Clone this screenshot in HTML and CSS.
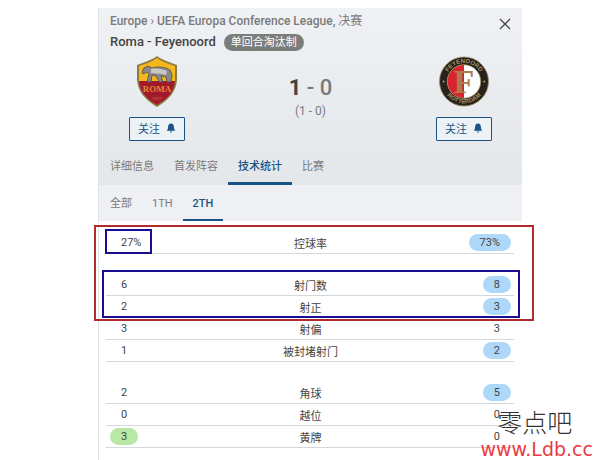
FILE: index.html
```html
<!DOCTYPE html>
<html lang="zh-CN">
<head>
    <meta charset="UTF-8">
    <meta name="viewport" content="width=device-width, initial-scale=1">
    <title>Roma - Feyenoord</title>
    <link rel="stylesheet" href="styles.css">
</head>
<body>
    <main class="match">
        <header class="match-header">
            <div class="match-top">
                <div>
                    <p class="breadcrumb">Europe <span class="sep">›</span> UEFA Europa Conference League, <span class="stage">决赛</span></p>
                    <h1>Roma - Feyenoord <span class="tag">单回合淘汰制</span></h1>
                </div>
                <button class="close-btn" aria-label="关闭">
                    <svg width="12" height="12" viewBox="0 0 12 12"><path d="M1 1L11 11M11 1L1 11" stroke="#444" stroke-width="1.3"/></svg>
                </button>
            </div>

            <div class="teams">
                <div class="team">
                    <svg class="logo" viewBox="0 0 50 51">
                        <path d="M25 0C20 4 12 6 5 9V24C6 35 12 43 25 51C38 43 44 35 45 24V9C38 6 30 4 25 0Z" fill="#8d7b45"/>
                        <path d="M25 2C20 6 13 8 7 10V25H43V10C37 8 30 6 25 2Z" fill="#f5b81c"/>
                        <path d="M7 25H43C42 35 37 42 25 49C13 42 8 35 7 25Z" fill="#a3182c"/>
                        <path d="M10 16L12 12L16 10L20 12C26 10 33 11 38 14L40 19L39 26H35L34 21L29 20L31 26H27L24 20L20 19L19 26H15L17 18L15 16L11 18Z" fill="#8a8987" stroke="#4c4a48" stroke-width="0.8"/>
                        <path d="M19 13C25 12 30 13 35 15L34 19C28 17 23 18 19 17Z" fill="#c9c7c4"/>
                        <text x="25" y="36" class="roma-name">ROMA</text>
                        <text x="25" y="44" class="roma-year">1927</text>
                    </svg>
                    <button class="follow-btn">关注
                        <svg width="10" height="10" viewBox="0 0 10 10"><path d="M5 0.4C6.9 0.6 7.9 2 7.9 3.8C7.9 6 8.5 6.8 9.3 7.8H0.7C1.5 6.8 2.1 6 2.1 3.8C2.1 2 3.1 0.6 5 0.4ZM3.8 8.6H6.2C6.1 10 3.9 10 3.8 8.6Z" fill="#1a5285"/></svg>
                    </button>
                </div>

                <div class="score">
                    <p class="score-full"><b>1</b> - 0</p>
                    <p class="score-half">(1 - 0)</p>
                </div>

                <div class="team">
                    <svg class="logo" viewBox="0 0 50 51">
                        <defs>
                            <path id="ring-top" d="M6.5 25.5A18.5 18.5 0 0 1 43.5 25.5"/>
                            <path id="ring-bottom" d="M3.2 25.5A21.8 21.8 0 0 0 46.8 25.5"/>
                        </defs>
                        <circle cx="25" cy="25.5" r="24.5" fill="#27221b" stroke="#9b8b66" stroke-width="0.8"/>
                        <circle cx="25" cy="25.5" r="16.7" fill="#fff"/>
                        <path d="M25 8.8A16.7 16.7 0 0 0 25 42.2Z" fill="#d9232e"/>
                        <circle cx="25" cy="25.5" r="16.7" fill="none" stroke="#a08b5c" stroke-width="0.8"/>
                        <text x="25" y="37" class="crest-letter">F</text>
                        <text class="ring-text"><textPath href="#ring-top" startOffset="50%">FEYENOORD</textPath></text>
                        <text class="ring-text"><textPath href="#ring-bottom" startOffset="50%">ROTTERDAM</textPath></text>
                        <circle cx="4.7" cy="25.5" r="1" fill="#b09d70"/>
                        <circle cx="45.3" cy="25.5" r="1" fill="#b09d70"/>
                    </svg>
                    <button class="follow-btn">关注
                        <svg width="10" height="10" viewBox="0 0 10 10"><path d="M5 0.4C6.9 0.6 7.9 2 7.9 3.8C7.9 6 8.5 6.8 9.3 7.8H0.7C1.5 6.8 2.1 6 2.1 3.8C2.1 2 3.1 0.6 5 0.4ZM3.8 8.6H6.2C6.1 10 3.9 10 3.8 8.6Z" fill="#1a5285"/></svg>
                    </button>
                </div>
            </div>

            <nav class="tabs">
                <a href="#">详细信息</a>
                <a href="#">首发阵容</a>
                <a href="#" class="active">技术统计</a>
                <a href="#">比赛</a>
            </nav>
        </header>

        <nav class="tabs sub-tabs">
            <a href="#">全部</a>
            <a href="#">1TH</a>
            <a href="#" class="active">2TH</a>
        </nav>

        <section class="stats">
            <div class="stat-group">
                <div class="stat"><span class="value">27%</span><span>控球率</span><span class="value away">73%</span></div>
            </div>
            <div class="stat-group">
                <div class="stat"><span class="value">6</span><span>射门数</span><span class="value away">8</span></div>
                <div class="stat"><span class="value">2</span><span>射正</span><span class="value away">3</span></div>
                <div class="stat"><span class="value">3</span><span>射偏</span><span class="value">3</span></div>
                <div class="stat"><span class="value">1</span><span>被封堵射门</span><span class="value away">2</span></div>
            </div>
            <div class="stat-group">
                <div class="stat"><span class="value">2</span><span>角球</span><span class="value away">5</span></div>
                <div class="stat"><span class="value">0</span><span>越位</span><span class="value">0</span></div>
                <div class="stat"><span class="value home">3</span><span>黄牌</span><span class="value">0</span></div>
            </div>

            <!-- highlight frames over the rows -->
            <div class="frame frame-red"></div>
            <div class="frame frame-possession"></div>
            <div class="frame frame-shots"></div>
        </section>
    </main>

    <div class="watermark">
        <p class="mark-name">零点吧</p>
        <p class="mark-url">www.Ldb.cc</p>
    </div>
</body>
</html>
```
FILE: styles.css
```css
* {
    box-sizing: border-box;
}

body {
    margin: 0;
    padding: 8px 79px 0 98px;
    min-height: 100vh;
    display: flex;
    background: #fff;
    color: #444;
    font-family: Roboto, "Noto Sans CJK SC", sans-serif;
    font-size: 11px;
}

p, h1 {
    margin: 0;
}

button {
    font-family: inherit;
    cursor: pointer;
}

.match {
    flex: 1;
    border-left: 1px solid #dfe3e8;
}

.match-header {
    background: linear-gradient(#eff1f4, #e4e7e9);
}

.match-top {
    display: flex;
    justify-content: space-between;
    padding: 3px 11px 0;
}

.breadcrumb {
    font-size: 12px;
    font-weight: 500;
    line-height: 20px;
    color: #7a7a7a;
}

.sep,
.stage {
    font-weight: 400;
}

h1 {
    display: flex;
    align-items: center;
    gap: 8px;
    font-size: 13px;
    font-weight: 500;
    line-height: 22px;
}

.tag {
    padding: 0 7px;
    border-radius: 9px;
    background: #7b7d7b;
    color: #fff;
    font-size: 11px;
    font-weight: 400;
    line-height: 17px;
}

.close-btn {
    align-self: flex-start;
    display: flex;
    margin-top: 7px;
    padding: 0;
    border: none;
    background: none;
}

.teams {
    display: flex;
    justify-content: space-between;
    padding: 3px 30px 6px;
}

.team {
    display: flex;
    flex-direction: column;
    align-items: center;
    gap: 10px;
}

.logo {
    width: 50px;
    height: 51px;
}

.roma-name {
    font: 700 9px "Liberation Serif", serif;
    fill: #e08a32;
    text-anchor: middle;
}

.roma-year {
    font: 5px "Liberation Serif", serif;
    fill: #d0783a;
    text-anchor: middle;
}

.crest-letter {
    font: 700 34px "Liberation Serif", serif;
    fill: #ad7c4c;
    text-anchor: middle;
}

.ring-text {
    font: 700 6px "Liberation Sans", sans-serif;
    fill: #a3936c;
    text-anchor: middle;
}

.follow-btn {
    display: flex;
    align-items: center;
    justify-content: center;
    gap: 6px;
    width: 56px;
    height: 24px;
    padding: 0 0 2px;
    border: 1px solid #1a5285;
    border-radius: 1px;
    background: #edf2f6;
    color: #1a5285;
    font-size: 11px;
}

.score {
    padding-top: 18px;
    text-align: center;
    color: #7a7a7a;
}

.score-full {
    font-size: 22px;
    font-weight: 500;
    line-height: 28px;
}

.score-full b {
    color: #444;
}

.score-half {
    font-size: 12px;
    line-height: 18px;
}

.tabs {
    display: flex;
    padding-left: 1px;
}

.tabs a {
    padding: 4px 10px 0;
    border-bottom: 3px solid transparent;
    color: #7a7a7a;
    line-height: 31px;
    text-decoration: none;
}

.tabs a.active {
    border-color: #1a5285;
    color: #1a5285;
    font-weight: 500;
}

.sub-tabs {
    background: #eef0f4;
}

.sub-tabs a {
    border-bottom-width: 2px;
    line-height: 30px;
}

.stats {
    position: relative;
    display: flex;
    flex-direction: column;
    gap: 20px;
    padding: 11px 8px 12px 7px;
}

.stat {
    display: grid;
    grid-template-columns: 1fr auto 1fr;
    align-items: center;
    height: 22px;
    padding: 0 3px 0 4px;
    border-bottom: 1px solid #d5d8da;
}

.value {
    justify-self: start;
    padding: 0 11px;
    border-radius: 9px;
    line-height: 17px;
}

.value:last-child {
    justify-self: end;
}

.value.away {
    background: #add8f9;
}

.value.home {
    background: #b9e7a6;
}

.frame {
    position: absolute;
    border: 2px solid #1a0f94;
    pointer-events: none;
}

.frame-red {
    top: 4px;
    left: -5px;
    right: -12px;
    height: 96px;
    border-color: #b02a2e;
}

.frame-possession {
    top: 8px;
    left: 6px;
    width: 47px;
    height: 25px;
}

.frame-shots {
    top: 49px;
    left: 3px;
    right: 2px;
    height: 48px;
}

.watermark {
    position: absolute;
    right: 8px;
    bottom: 0;
    text-align: center;
}

.mark-name {
    padding: 0 4px 4px 0;
    color: #333;
    font-family: "Noto Sans CJK SC", sans-serif;
    font-size: 25px;
    font-weight: 300;
    line-height: 26px;
}

.mark-url {
    color: #ea3a42;
    font-family: "DejaVu Sans", sans-serif;
    font-size: 19px;
    line-height: 22px;
}
```
